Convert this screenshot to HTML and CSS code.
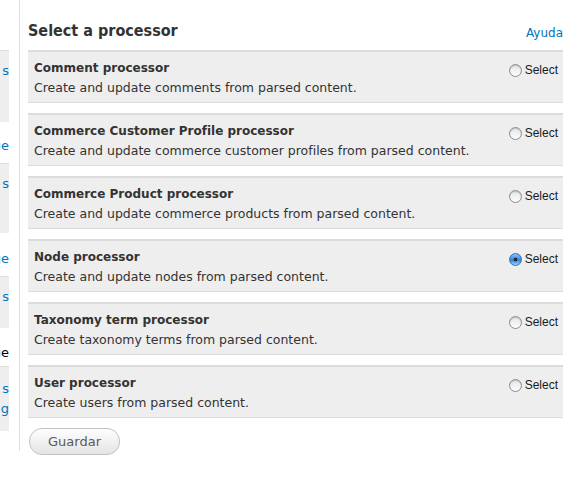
FILE: index.html
```html
<!DOCTYPE html>
<html lang="es">
<head>
<meta charset="utf-8">
<title>Select a processor</title>
<link rel="stylesheet" href="styles.css">
</head>
<body>
<div class="page">
  <aside class="sidebar">
    <div class="sb-box sb-h72"><a class="sb-line" href="#">s</a></div>
    <div class="sb-gap sb-g41"><a class="sb-line" href="#">ge</a></div>
    <div class="sb-box sb-h70"><a class="sb-line" href="#">s</a></div>
    <div class="sb-gap sb-g43"><a class="sb-line" href="#">ge</a></div>
    <div class="sb-box sb-h52"><a class="sb-line" href="#">s</a></div>
    <div class="sb-gap sb-g38"><span class="sb-line sb-plain">ge</span></div>
    <div class="sb-box sb-h65"><a class="sb-line" href="#">s</a><a class="sb-line" href="#">g</a></div>
  </aside>
  <main class="main">
    <header class="header">
      <h1 class="title">Select a processor</h1>
      <a class="help" href="#">Ayuda</a>
    </header>
    <div class="rows">
      <div class="row">
        <div class="row-text"><div class="row-title">Comment processor</div><div class="row-desc">Create and update comments from parsed content.</div></div>
        <label class="choice"><span class="radio"></span><span class="choice-label">Select</span></label>
      </div>
      <div class="row">
        <div class="row-text"><div class="row-title">Commerce Customer Profile processor</div><div class="row-desc">Create and update commerce customer profiles from parsed content.</div></div>
        <label class="choice"><span class="radio"></span><span class="choice-label">Select</span></label>
      </div>
      <div class="row">
        <div class="row-text"><div class="row-title">Commerce Product processor</div><div class="row-desc">Create and update commerce products from parsed content.</div></div>
        <label class="choice"><span class="radio"></span><span class="choice-label">Select</span></label>
      </div>
      <div class="row">
        <div class="row-text"><div class="row-title">Node processor</div><div class="row-desc">Create and update nodes from parsed content.</div></div>
        <label class="choice"><span class="radio radio-on"></span><span class="choice-label">Select</span></label>
      </div>
      <div class="row">
        <div class="row-text"><div class="row-title">Taxonomy term processor</div><div class="row-desc">Create taxonomy terms from parsed content.</div></div>
        <label class="choice"><span class="radio"></span><span class="choice-label">Select</span></label>
      </div>
      <div class="row">
        <div class="row-text"><div class="row-title">User processor</div><div class="row-desc">Create users from parsed content.</div></div>
        <label class="choice"><span class="radio"></span><span class="choice-label">Select</span></label>
      </div>
    </div>
    <button class="save" type="button">Guardar</button>
  </main>
</div>
</body>
</html>
```
FILE: styles.css
```css
html, body {
  margin: 0;
  padding: 0;
  background: #fff;
}
body {
  font-family: "DejaVu Sans", Verdana, sans-serif;
  font-size: 12px;
  color: #333;
}
a {
  color: #0074bd;
  text-decoration: none;
}
.page {
  display: flex;
  align-items: flex-start;
  width: 586px;
}
.sidebar {
  box-sizing: border-box;
  width: 20px;
  height: 451px;
  padding: 50px 10px 0 0;
  border-right: 1px solid #e0e0e0;
  overflow: hidden;
  flex: none;
}
.sb-box, .sb-gap {
  box-sizing: border-box;
  width: 9px;
  display: flex;
  flex-direction: column;
  align-items: flex-end;
  font-size: 13px;
  line-height: 20px;
}
.sb-box {
  background: #eee;
  border-top: 1px solid #ddd;
  padding-top: 10px;
}
.sb-line {
  white-space: nowrap;
  flex: none;
}
.sb-plain {
  color: #000;
}
.sb-h72 { height: 72px; }
.sb-h70 { height: 70px; }
.sb-h52 { height: 52px; }
.sb-h65 { height: 65px; padding-top: 12px; }
.sb-g41 { height: 41px; padding-top: 14px; }
.sb-g43 { height: 43px; padding-top: 16px; }
.sb-g38 { height: 38px; padding-top: 15px; }

.main {
  width: 535px;
  margin-left: 8px;
  flex: none;
}
.header {
  display: flex;
  justify-content: space-between;
  align-items: flex-start;
  box-sizing: border-box;
  height: 50px;
  padding-top: 21px;
}
.title {
  margin: 0;
  font-family: "DejaVu Sans Condensed", "DejaVu Sans", sans-serif;
  font-weight: bold;
  font-size: 16px;
  line-height: 20px;
  color: #333;
}
.help {
  font-size: 12px;
  line-height: 16px;
  margin-top: 4px;
}
.rows {
  display: flex;
  flex-direction: column;
  gap: 10px;
}
.row {
  box-sizing: border-box;
  height: 53px;
  display: flex;
  justify-content: space-between;
  align-items: flex-start;
  padding: 6px 5px 4px 6px;
  background: #eee;
  border-top: 2px solid #dcdcdc;
  border-bottom: 1px solid #dcdcdc;
  line-height: 20px;
}
.row-title {
  font-weight: bold;
  color: #333;
}
.row-desc {
  font-size: 12.5px;
  color: #333;
}
.choice {
  display: flex;
  align-items: center;
  gap: 3px;
  margin-top: 5px;
  font-family: "Liberation Sans", Arial, sans-serif;
  font-size: 12px;
  line-height: 14px;
  color: #1a1a1a;
}
.radio {
  box-sizing: border-box;
  width: 13px;
  height: 13px;
  border-radius: 50%;
  border: 1px solid #8c8c8c;
  background: linear-gradient(#e6e6e6, #fdfdfd);
  box-shadow: inset 0 1px 1px rgba(0,0,0,0.18);
}
.radio-on {
  border-color: #3a6fb0;
  background: radial-gradient(circle at 50% 50%, #1d2a3a 0, #1d2a3a 1.6px, transparent 2.2px), linear-gradient(#8fc0f2, #2f82e0 55%, #9fd0fa);
  box-shadow: none;
}
.save {
  display: block;
  margin-top: 10px;
  margin-left: 1px;
  box-sizing: border-box;
  width: 91px;
  height: 27px;
  padding: 0;
  border: 1px solid #c2c2c2;
  border-radius: 13px;
  background: linear-gradient(#fefefe, #e4e4e4);
  font-family: "DejaVu Sans", sans-serif;
  font-size: 13px;
  color: #5a5a5a;
}
```
